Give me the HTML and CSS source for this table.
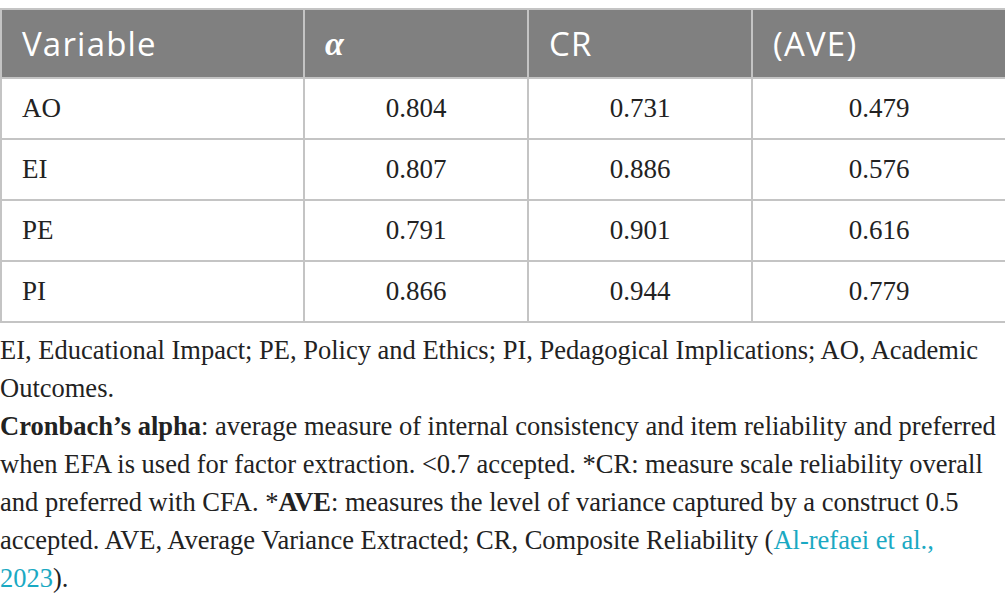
FILE: index.html
```html
<!DOCTYPE html>
<html>
<head>
<meta charset="utf-8">
<link rel="stylesheet" href="styles.css">
</head>
<body>
<table class="data">
  <colgroup>
    <col class="c1"><col class="c2"><col class="c3"><col class="c4">
  </colgroup>
  <thead>
    <tr><th>Variable</th><th class="alpha">α</th><th>CR</th><th>(AVE)</th></tr>
  </thead>
  <tbody>
    <tr><td>AO</td><td class="num">0.804</td><td class="num">0.731</td><td class="num">0.479</td></tr>
    <tr><td>EI</td><td class="num">0.807</td><td class="num">0.886</td><td class="num">0.576</td></tr>
    <tr><td>PE</td><td class="num">0.791</td><td class="num">0.901</td><td class="num">0.616</td></tr>
    <tr><td>PI</td><td class="num">0.866</td><td class="num">0.944</td><td class="num">0.779</td></tr>
  </tbody>
</table>
<div class="notes">
  <p>EI, Educational Impact; PE, Policy and Ethics; PI, Pedagogical Implications; AO, Academic Outcomes.</p>
  <p><b>Cronbach’s alpha</b>: average measure of internal consistency and item reliability and preferred when EFA is used for factor extraction. &lt;0.7 accepted. *CR: measure scale reliability overall and preferred with CFA. *<b>AVE</b>: measures the level of variance captured by a construct 0.5 accepted. AVE, Average Variance Extracted; CR, Composite Reliability (<a class="cite" href="#">Al-refaei et al., 2023</a>).</p>
</div>
</body>
</html>
```

FILE: styles.css
```css
html, body {
  margin: 0;
  padding: 0;
  background: #ffffff;
}
body {
  padding-top: 8px;
  width: 1005px;
}
.data {
  border-collapse: collapse;
  width: 1005px;
  table-layout: fixed;
}
.c1 { width: 303px; }
.c2 { width: 224px; }
.c3 { width: 224px; }
.c4 { width: 254px; }
.data th, .data td {
  border: 2px solid #c4c4c4;
  padding: 0 20px;
  text-align: left;
}
.data th {
  background: #808080;
  color: #ffffff;
  font-family: "Open Sans", "Lato", sans-serif;
  font-weight: 400;
  font-size: 33px;
  height: 67px;
  letter-spacing: 1.2px;
}
.data th.alpha {
  font-family: "Liberation Serif", serif;
  font-style: italic;
  font-weight: 700;
  font-size: 34px;
  letter-spacing: 0;
}
.data td {
  font-family: "Liberation Serif", "Times New Roman", serif;
  font-size: 27px;
  color: #222222;
  height: 59px;
}
.data td.num {
  text-align: center;
}
.notes {
  font-family: "Liberation Serif", "Times New Roman", serif;
  font-size: 26.5px;
  line-height: 38px;
  color: #222222;
  padding-top: 8px;
}
.notes p {
  margin: 0;
}
.cite {
  color: #1aa9c3;
  text-decoration: none;
}
```
